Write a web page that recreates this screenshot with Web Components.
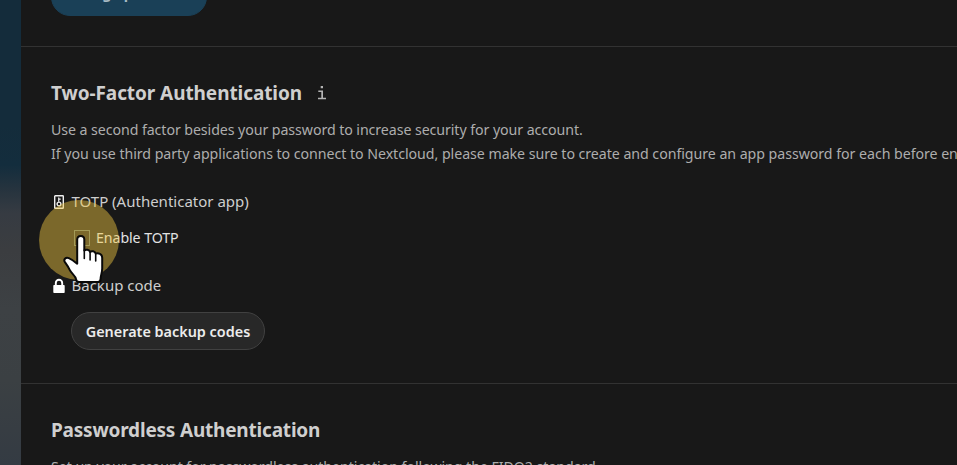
<!DOCTYPE html>
<html lang="en">
<head>
<meta charset="utf-8">
<title>Security settings</title>
<style>
html,body{margin:0;height:100%;overflow:hidden;background:#181818}
body{font-family:"Noto Sans","Open Sans",sans-serif;color:#d4d4d4}
</style>
</head>
<body>
<settings-page></settings-page>
<script>
const define = (name, markup) => customElements.define(name, class extends HTMLElement {
  constructor() {
    super();
    const t = document.createElement('template');
    t.innerHTML = markup;
    this.attachShadow({ mode: 'open' }).append(t.content.cloneNode(true));
  }
});

define('settings-section', `<style>
:host{display:block;box-sizing:border-box;padding:30px 0 0 30px;border-bottom:1px solid #323232;white-space:nowrap}
</style><slot></slot>`);

define('section-title', `<style>
:host{display:flex;align-items:center;height:32px;gap:15px;font-size:19px;font-weight:700;line-height:32px;color:#cfcfcf}
</style><slot></slot>`);

define('info-icon', `<style>
:host{display:block;width:10px;height:16px}svg{display:block}
</style><svg width="10" height="16" viewBox="0 0 10 16"><path d="M3.7 1h2.3v2.2H3.7zM1.3 5.5H6v7.2h3v1.5H1v-1.5h3.3V7h-3z" fill="#b4b4b4"/></svg>`);

define('help-text', `<style>
:host{display:block;font-size:14.2px;line-height:24px;color:#adadad;letter-spacing:-.075px}
</style><slot></slot>`);

define('provider-row', `<style>
:host{display:flex;align-items:center;height:24px;gap:4.5px;font-size:15px;line-height:24px;color:#cecece}
.icon{width:16px;height:16px;padding-top:2px}
</style><div class="icon"><slot name="icon"></slot></div><span><slot></slot></span>`);

define('key-icon', `<style>:host,svg{display:block}</style>
<svg width="16" height="16" viewBox="0 0 16 16"><rect x="3.7" y="1.7" width="8.6" height="12.6" rx=".6" fill="#181818" stroke="#eee" stroke-width="1.4"/><path d="M7.7 3.4v4.4M7.7 5.2h2" stroke="#eee" stroke-width="1.2"/><circle cx="8" cy="10" r="1.9" fill="none" stroke="#eee" stroke-width="1.4"/></svg>`);

define('lock-icon', `<style>:host,svg{display:block}</style>
<svg width="16" height="16" viewBox="0 0 16 16"><path d="M4.8 8V5a3.2 3.2 0 0 1 6.4 0V8" fill="none" stroke="#fff" stroke-width="1.9"/><rect x="2.3" y="7" width="11.4" height="8" rx=".8" fill="#fff"/></svg>`);

define('check-option', `<style>
:host{display:flex;align-items:center;height:24px;gap:6px;padding-left:23px;font-size:14.2px;line-height:24px;letter-spacing:-.08px;color:#e2e2e2}
i{box-sizing:border-box;width:16px;height:16px;border:1px solid #62746a}
</style><i></i><span><slot></slot></span>`);

define('pill-button', `<style>
:host{display:flex;box-sizing:border-box;align-items:center;justify-content:center;height:38px;border-radius:19px;border:1px solid #414141;background:#282828;color:#ececec;font-size:14.4px;font-weight:600;line-height:22px;padding-top:2px}
:host([primary]){background:#1a4057;border-color:#1a4057;color:#a8bac4;font-weight:700;padding:0 0 6px}
</style><slot></slot>`);

define('pointer-highlight', `<style>
:host{position:absolute;left:39px;top:200px;width:80px;height:90px;pointer-events:none}
.disc{width:80px;height:80px;border-radius:50%;background:rgba(242,200,66,.455)}
svg{position:absolute;left:21px;top:31px}
</style><div class="disc"></div>
<svg width="50" height="58" viewBox="60 231 50 58"><path d="M80.8 236c2.1 0 3.5 1.6 3.5 3.6v10.9c1.3-1.5 5.1-1 5.8 1.4 1.4-1.2 4.8-.8 5.5 1.6 2.8-1 6.6.3 6.6 4.2v10.8c0 4.5-1.5 6.5-1.6 10.4-.1 2-.9 3.2-2.7 3.2H79c-2 0-2.8-1-3-3-.3-3.3-4.4-5.2-6.3-9.2-1.4-3-3-5.3-4.6-7.5-2-2.7.4-5.6 3.7-4.3 3.2 1.3 5.6 3.2 8.4 5.6v-24c0-2.2 1.5-3.7 3.6-3.7Z" fill="#fff" stroke="#090909" stroke-width="2" stroke-linejoin="round"/><path d="M84.3 250v8.5M90.1 252v8M95.7 254v7" stroke="#090909" stroke-width="1.6" stroke-linecap="round"/></svg>`);

define('settings-page', `<style>
:host{display:grid;grid-template-columns:21px 1fr;position:relative;height:465px;overflow:hidden}
.backdrop{background:linear-gradient(#142c3b 0,#142c3b 125px,#132d3d 165px,#25333e 188px,#363b42 213px,#3b3d40 250px,#3d4144 310px,#3b4043 380px,#343b43 465px)}
main{min-width:0;background:#181818;overflow:hidden}
.password{height:47px;padding-top:0;display:flex;align-items:flex-start}
.password pill-button{width:156px;margin-top:-22px}
.factor{height:337px}
.factor help-text:first-of-type{margin-top:9px}
.second{letter-spacing:-.045px}
.totp{margin-top:23px}
check-option{margin-top:13px}
.backup{margin-top:23px}
.codes{width:194px;margin:15px 0 0 20px}
.factor section-title{letter-spacing:-.08px}
.passwordless{border:0}
.passwordless section-title{letter-spacing:-.2px}
.passwordless help-text{margin-top:9px;letter-spacing:-.055px}
</style>
<div class="backdrop"></div>
<main>
<settings-section class="password"><pill-button primary>Change password</pill-button></settings-section>
<settings-section class="factor">
<section-title><span>Two-Factor Authentication</span><info-icon></info-icon></section-title>
<help-text>Use a second factor besides your password to increase security for your account.</help-text>
<help-text class="second">If you use third party applications to connect to Nextcloud, please make sure to create and configure an app password for each before en</help-text>
<provider-row class="totp"><key-icon slot="icon"></key-icon>TOTP (Authenticator app)</provider-row>
<check-option>Enable TOTP</check-option>
<provider-row class="backup"><lock-icon slot="icon"></lock-icon>Backup code</provider-row>
<pill-button class="codes">Generate backup codes</pill-button>
</settings-section>
<settings-section class="passwordless">
<section-title>Passwordless Authentication</section-title>
<help-text>Set up your account for passwordless authentication following the FIDO2 standard.</help-text>
</settings-section>
</main>
<pointer-highlight></pointer-highlight>`);
</script>
</body>
</html>
